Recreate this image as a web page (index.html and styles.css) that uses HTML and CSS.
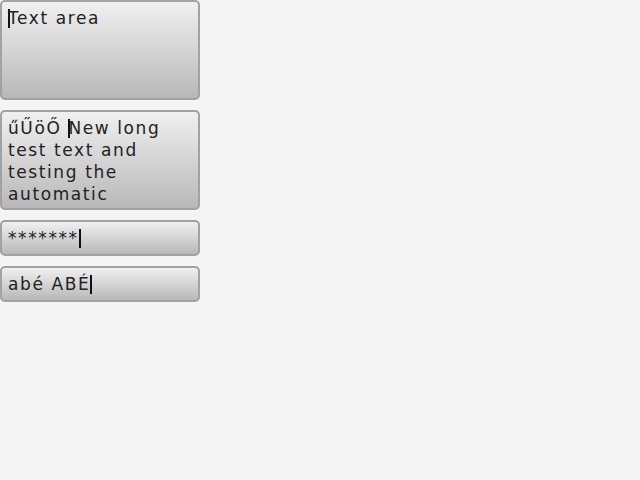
FILE: index.html
```html
<!DOCTYPE html>
<html>
<head>
<meta charset="utf-8">
<link rel="stylesheet" href="styles.css">
</head>
<body>
<div class="stack">
  <div class="field area"><div class="text"><span class="caret"></span>Text area</div></div>
  <div class="field area"><div class="text">űŰöŐ <span class="caret"></span>New long test text and testing the automatic wrapping</div></div>
  <div class="field line"><div class="text">*******<span class="caret"></span></div></div>
  <div class="field line"><div class="text">abé ABÉ<span class="caret"></span></div></div>
</div>
</body>
</html>
```
FILE: styles.css
```css
html, body {
  margin: 0;
  padding: 0;
  background: #f4f4f4;
  width: 640px;
  height: 480px;
}
.stack {
  display: flex;
  flex-direction: column;
  gap: 10px;
  width: 200px;
}
.field {
  box-sizing: border-box;
  width: 200px;
  border: 2px solid #a2a2a2;
  border-radius: 5px;
  background: linear-gradient(#f0f0f0, #b8b8b8);
  overflow: hidden;
  padding: 5px 6px 0 6px;
  font-family: "DejaVu Sans", sans-serif;
  font-size: 17px;
  line-height: 22px;
  letter-spacing: 1.6px;
  color: #222;
}
.area { height: 100px; }
.line { height: 36px; }
.caret {
  display: inline-block;
  width: 2px;
  height: 19px;
  background: #111;
  vertical-align: -4px;
  margin-right: -2px;
}
```
